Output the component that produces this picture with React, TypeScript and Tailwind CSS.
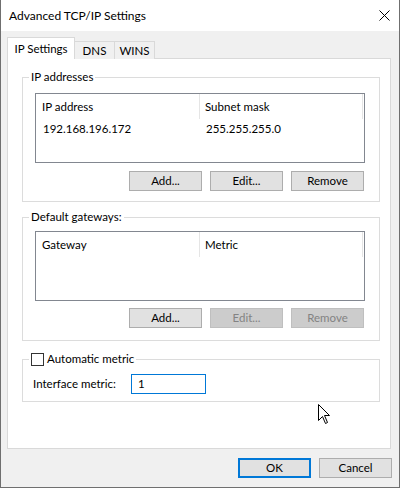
import { ReactNode } from "react";

type Column = { label: string; width: string; pad: string };

function WinButton({
  children,
  disabled,
  primary,
}: {
  children: ReactNode;
  disabled?: boolean;
  primary?: boolean;
}) {
  let look = "border border-[#adadad] bg-[#e1e1e1] text-black";
  if (disabled) look = "border border-[#bfbfbf] bg-[#cccccc] text-[#838383]";
  if (primary) look = "border-2 border-[#0078d7] bg-[#e1e1e1] text-black";
  return (
    <div className={`flex h-[20px] w-[73px] items-center justify-center ${look}`}>
      {children}
    </div>
  );
}

function ListBox({ columns, rows }: { columns: Column[]; rows: string[][] }) {
  return (
    <div className="h-[70px] w-[330px] border border-[#828790] bg-white">
      <div className="flex h-[25px]">
        {columns.map((c) => (
          <div
            key={c.label}
            className={`flex h-full items-center border-r border-[#e5e5e5] ${c.width} ${c.pad}`}
          >
            {c.label}
          </div>
        ))}
      </div>
      {rows.map((r, i) => (
        <div key={i} className="flex h-[20px] items-center">
          {r.map((cell, j) => (
            <div key={j} className={`${columns[j].width} ${j === 0 ? "pl-[7px]" : "pl-[6px]"}`}>
              {cell}
            </div>
          ))}
        </div>
      ))}
    </div>
  );
}

function GroupBox({
  legend,
  className,
  children,
}: {
  legend: ReactNode;
  className: string;
  children: ReactNode;
}) {
  return (
    <div className={`relative ml-[14px] w-[358px] border border-[#dcdcdc] ${className}`}>
      <div className="absolute left-[6px] top-[-9px] flex h-[16px] items-center bg-white px-[2px]">
        {legend}
      </div>
      {children}
    </div>
  );
}

function Cursor() {
  return (
    <svg
      className="absolute left-[317px] top-[404px]"
      width="14"
      height="22"
      viewBox="0 0 14 22"
    >
      <path
        d="M0.5 0.5 L0.5 16.5 L4.5 12.5 L7.5 19.5 L9.5 18.5 L6.5 11.5 L11.5 11.5 Z"
        fill="white"
        stroke="black"
        strokeWidth="1"
        strokeLinejoin="miter"
      />
    </svg>
  );
}

const ipColumns: Column[] = [
  { label: "IP address", width: "w-[164px]", pad: "pl-[6px]" },
  { label: "Subnet mask", width: "w-[163px]", pad: "pl-[5px]" },
];

const gwColumns: Column[] = [
  { label: "Gateway", width: "w-[164px]", pad: "pl-[6px]" },
  { label: "Metric", width: "w-[163px]", pad: "pl-[5px]" },
];

export default function App() {
  return (
    <div className="relative flex h-[488px] w-[400px] flex-col border-x border-b border-[#6f6f6f] font-['Lato',sans-serif] text-[11.5px] leading-[16px] text-black">
      <div className="flex h-[31px] shrink-0 items-center justify-between bg-white pl-[8px] pr-[9px]">
        <span className="text-[12px]">Advanced TCP/IP Settings</span>
        <svg width="11" height="11" viewBox="0 0 11 11">
          <path d="M0.5 0.5 L10.5 10.5 M10.5 0.5 L0.5 10.5" stroke="black" strokeWidth="1" />
        </svg>
      </div>

      <div className="flex-1 bg-[#f0f0f0]">
        <div className="ml-[6px] mt-[6px] flex h-[22px] items-end -mb-px">
          <div className="relative z-10 flex h-[22px] w-[68px] items-center justify-center border border-b-0 border-[#d9d9d9] bg-white">
            IP Settings
          </div>
          <div className="flex h-[18px] w-[40px] items-center justify-center border border-b-0 border-l-0 border-[#d9d9d9] bg-[#f0f0f0]">
            DNS
          </div>
          <div className="flex h-[18px] w-[40px] items-center justify-center border border-b-0 border-l-0 border-[#d9d9d9] bg-[#f0f0f0]">
            WINS
          </div>
        </div>

        <div className="ml-[6px] h-[391px] w-[384px] border border-[#d9d9d9] bg-white pt-[18px]">
          <GroupBox legend="IP addresses" className="h-[125px]">
            <div className="ml-[12px] mt-[15px]">
              <ListBox columns={ipColumns} rows={[["192.168.196.172", "255.255.255.0"]]} />
              <div className="mt-[8px] flex w-[329px] justify-end gap-[8px]">
                <WinButton>Add...</WinButton>
                <WinButton>Edit...</WinButton>
                <WinButton>Remove</WinButton>
              </div>
            </div>
          </GroupBox>

          <GroupBox legend="Default gateways:" className="mt-[15px] h-[124px]">
            <div className="ml-[12px] mt-[13px]">
              <ListBox columns={gwColumns} rows={[]} />
              <div className="mt-[7px] flex w-[329px] justify-end gap-[8px]">
                <WinButton>Add...</WinButton>
                <WinButton disabled>Edit...</WinButton>
                <WinButton disabled>Remove</WinButton>
              </div>
            </div>
          </GroupBox>

          <GroupBox
            className="mt-[18px] h-[43px]"
            legend={
              <div className="flex items-center gap-[3px]">
                <div className="h-[13px] w-[13px] border border-[#333333] bg-white" />
                <span>Automatic metric</span>
              </div>
            }
          >
            <div className="mt-[14px] flex items-center pl-[10px]">
              <span className="w-[98px]">Interface metric:</span>
              <div className="flex h-[20px] w-[75px] items-center border border-[#0078d7] pl-[6px]">
                1
              </div>
            </div>
          </GroupBox>
        </div>

        <div className="mt-[9px] flex justify-end gap-[8px] pr-[7px]">
          <WinButton primary>OK</WinButton>
          <WinButton>Cancel</WinButton>
        </div>
      </div>

      <Cursor />
    </div>
  );
}
